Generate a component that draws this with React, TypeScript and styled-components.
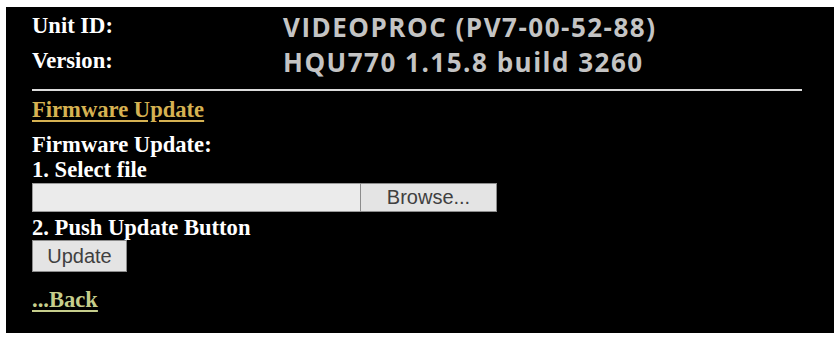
import React from 'react';
import styled, { createGlobalStyle } from 'styled-components';

const GlobalStyle = createGlobalStyle`
    html, body {
        margin: 0;
        padding: 0;
        background: #ffffff;
    }
`;

const Panel = styled.div`
    margin: 7px 0 0 6px;
    width: 828px;
    height: 326px;
    box-sizing: border-box;
    background: #000000;
    padding: 6px 32px 0 26px;
    font-family: "Liberation Serif", "Times New Roman", serif;
    font-weight: bold;
    font-size: 22.6px;
    color: #ffffff;
`;

const InfoGrid = styled.div`
    display: grid;
    grid-template-columns: 251px 1fr;
    grid-auto-rows: 35px;
`;

const Label = styled.div`
    line-height: 25px;
`;

const Value = styled.div`
    font-family: "Open Sans", "Liberation Sans", sans-serif;
    font-weight: 700;
    font-size: 26px;
    letter-spacing: 1.5px;
    line-height: 28px;
    color: #c4c4c4;
`;

const Rule = styled.hr`
    margin: 6px 0 0 0;
    border: none;
    height: 2px;
    background: #dcdcdc;
`;

const Section = styled.div`
    display: flex;
    flex-direction: column;
    align-items: flex-start;
    line-height: 25px;
    padding-top: 6px;
`;

const Link = styled.a<{ $tone: string }>`
    color: ${(p) => p.$tone};
    text-decoration: underline;
    text-underline-offset: 3px;
    cursor: pointer;
`;

const Line = styled.div<{ $gap?: number }>`
    margin-top: ${(p) => p.$gap ?? 0}px;
`;

const ControlRow = styled.div<{ $gap: number }>`
    display: flex;
    margin-top: ${(p) => p.$gap}px;
`;

const FileField = styled.input`
    width: 328px;
    height: 29px;
    box-sizing: border-box;
    border: 1px solid #9a9a9a;
    border-right: none;
    background: #ebebeb;
    margin: 0;
    padding: 0;
`;

const PlainButton = styled.button<{ $w: number; $h: number }>`
    width: ${(p) => p.$w}px;
    height: ${(p) => p.$h}px;
    box-sizing: border-box;
    margin: 0;
    padding: 0;
    border: 1px solid #8c8c8c;
    background: #e4e4e4;
    color: #404040;
    font-family: "Liberation Sans", Arial, sans-serif;
    font-size: 20px;
    font-weight: normal;
    cursor: pointer;
`;

const App: React.FunctionComponent = () => {
    return (
        <>
            <GlobalStyle />
            <Panel>
                <InfoGrid>
                    <Label>Unit ID:</Label>
                    <Value>VIDEOPROC (PV7-00-52-88)</Value>
                    <Label>Version:</Label>
                    <Value>HQU770 1.15.8 build 3260</Value>
                </InfoGrid>
                <Rule />
                <Section>
                    <Link $tone="#d6b252">Firmware Update</Link>
                    <Line $gap={10}>Firmware Update:</Line>
                    <Line>1. Select file</Line>
                    <ControlRow $gap={1}>
                        <FileField type="text" readOnly />
                        <PlainButton $w={137} $h={29}>Browse...</PlainButton>
                    </ControlRow>
                    <Line $gap={3}>2. Push Update Button</Line>
                    <ControlRow $gap={0}>
                        <PlainButton $w={95} $h={32}>Update</PlainButton>
                    </ControlRow>
                    <Line $gap={15}>
                        <Link $tone="#c6ce8c">...Back</Link>
                    </Line>
                </Section>
            </Panel>
        </>
    );
};

export default App;
